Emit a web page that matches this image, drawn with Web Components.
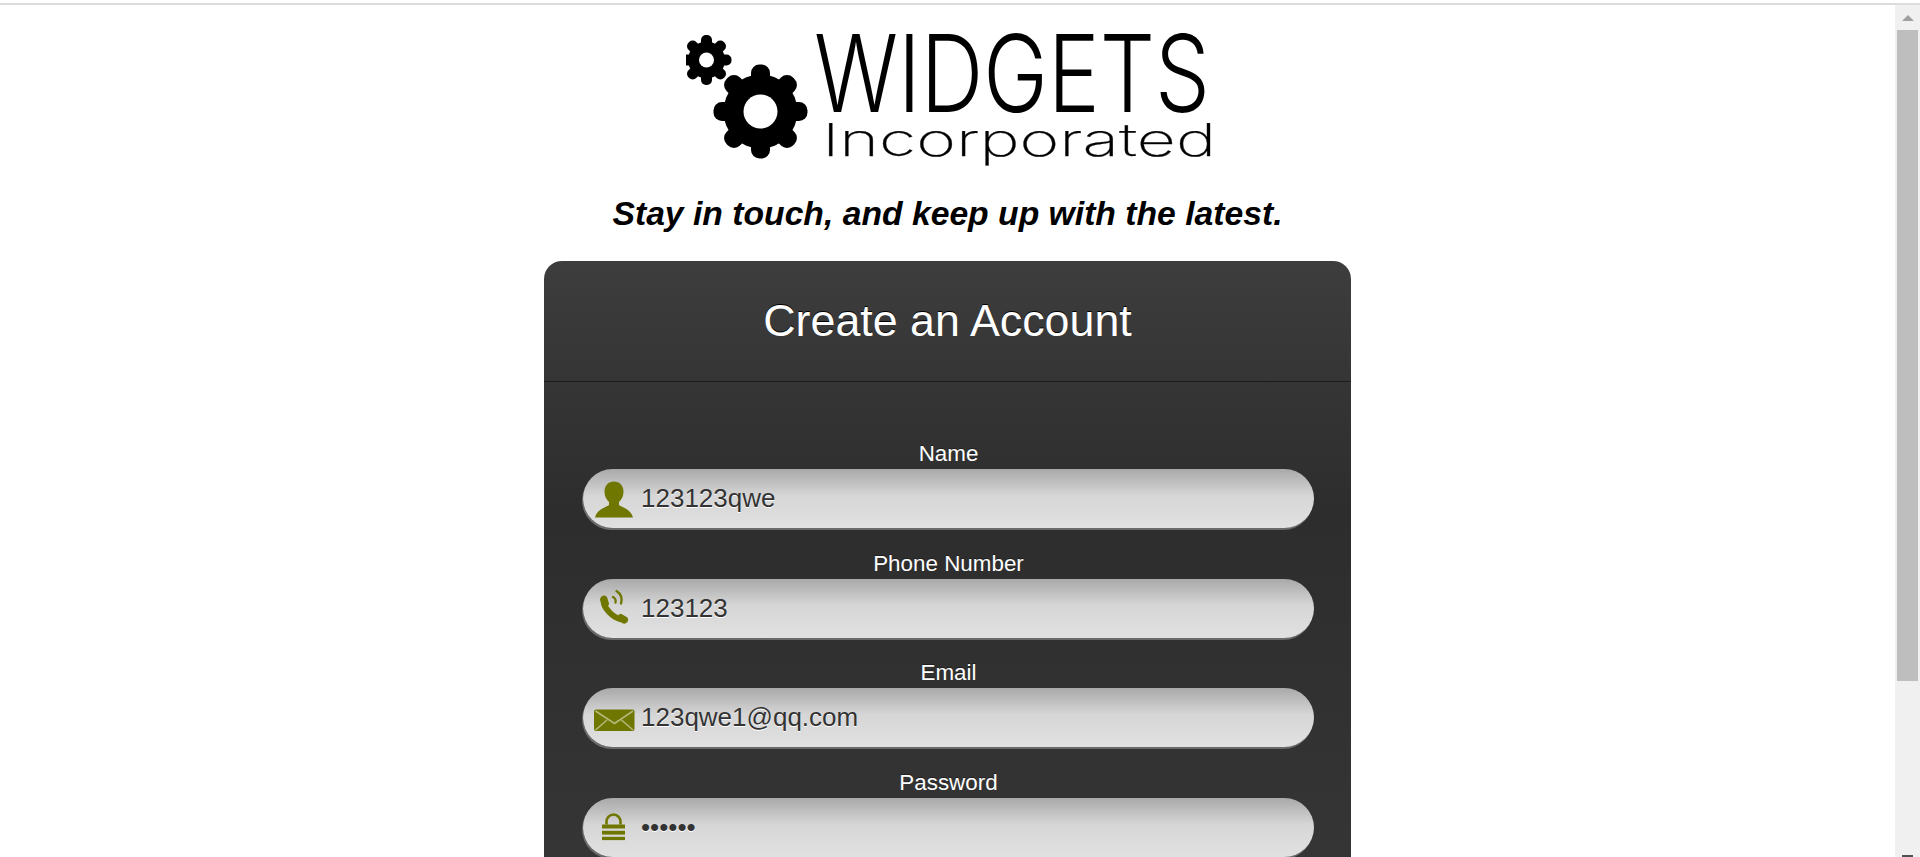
<!DOCTYPE html>
<html><head><meta charset="utf-8"><title>Widgets Incorporated</title>
<style>
html,body{margin:0;height:857px;overflow:hidden;background:#fff;font-family:"Liberation Sans",Arial,sans-serif}
</style></head><body>
<signup-page>
  <brand-logo slot="logo"></brand-logo>
  <span slot="tagline">Stay in touch, and keep up with the latest.</span>
  <account-card slot="card" heading="Create an Account">
    <form-field label="Name" value="123123qwe" icon="person"></form-field>
    <form-field label="Phone Number" value="123123" icon="phone"></form-field>
    <form-field label="Email" value="123qwe1@qq.com" icon="mail"></form-field>
    <form-field label="Password" value="••••••" icon="lock"></form-field>
  </account-card>
</signup-page>
<script>
class SignupPage extends HTMLElement{constructor(){super();this.attachShadow({mode:'open'}).innerHTML=`<style>
:host{display:block;height:857px;overflow:hidden}
.top{height:3px;background:#fff}.rule{height:2px;background:#dcdcdc}
.frame{display:flex;height:852px;overflow:hidden}
main{flex:1;min-width:0;display:flex;flex-direction:column;align-items:center;overflow:hidden}
.logo{margin-top:25px;height:142px;width:100%;display:flex;justify-content:center}
.tag{margin-top:21px;font:italic bold 33.7px/41px "Liberation Sans",Arial,sans-serif;color:#000;height:41px;white-space:nowrap}
.card{margin-top:27px}
.bar{width:25px;flex:none;background:#f0f0f0;display:flex;flex-direction:column;align-items:center;height:852px}
.up{margin-top:10px;width:0;height:0;border:6px solid transparent;border-top:0;border-bottom:6px solid #a0a0a0}
.thumb{margin-top:9px;width:21px;height:651px;background:#bebebe}
.down{margin-top:auto;width:11px;height:2px;background:#505050}
</style>
<div class="top"></div><div class="rule"></div>
<div class="frame"><main><div class="logo"><slot name="logo"></slot></div><div class="tag"><slot name="tagline"></slot></div><div class="card"><slot name="card"></slot></div></main>
<div class="bar"><div class="up"></div><div class="thumb"></div><div class="down"></div></div></div>`}}
customElements.define('signup-page',SignupPage);

const teeth=(l,w,rx)=>[0,45,90,135].map(a=>`<rect x="${-l}" y="${-w/2}" width="${2*l}" height="${w}" rx="${rx}" transform="rotate(${a})"/>`).join('');
class BrandLogo extends HTMLElement{constructor(){super();this.attachShadow({mode:'open'}).innerHTML=`<style>
:host{display:flex;width:524px;height:142px;color:#000}
svg{display:block;flex:none}
.words{width:396px;display:flex;flex-direction:column}
span{display:block;width:max-content;white-space:nowrap;transform-origin:0 0}
.w{font:300 107px/84px "Inter","Liberation Sans",sans-serif;height:84px;margin-top:1px}
.i{font:200 45px/50px "Inter","Liberation Sans",sans-serif;height:50px;margin-left:8px;-webkit-text-stroke:.25px #222}
</style>
<svg width="128" height="142" viewBox="0 0 128 142">
<g transform="translate(20.5 30)"><circle r="18.5"/>${teeth(25,11,5)}<circle r="7.5" fill="#fff"/></g>
<g transform="translate(74.5 81.500)"><circle r="37"/>${teeth(47,19,8.5)}<circle r="17" fill="#fff"/></g>
</svg>
<div class="words"><span class="w">WIDGETS</span><span class="i">Incorporated</span></div>`}
connectedCallback(){const s=this.shadowRoot;const fit=(el,w)=>{el.style.transform=`scaleX(${w/el.getBoundingClientRect().width})`};fit(s.querySelector('.w'),396);fit(s.querySelector('.i'),394)}}
customElements.define('brand-logo',BrandLogo);

class AccountCard extends HTMLElement{constructor(){super();this.attachShadow({mode:'open'}).innerHTML=`<style>
:host{display:block;width:807px;height:900px;box-sizing:border-box;border-radius:18px 18px 0 0;background:linear-gradient(#3d3d3d 0,#2d2d2d 250px,#353535 600px);color:#fff}
header{height:120px;border-bottom:1px solid #1c1c1c;text-align:center;font-size:44.8px;line-height:118px;text-shadow:0 -1px 0 #000}
.body{padding:58.5px 39px 0 39px;display:grid;grid-auto-rows:109.67px}
</style><header id="h"></header><div class="body"><slot></slot></div>`;
this.shadowRoot.getElementById('h').textContent=this.getAttribute('heading')}}
customElements.define('account-card',AccountCard);

const C='#6f7700';
const ICONS={
person:`<svg width="40" height="40" viewBox="0 0 40 40"><path fill="${C}" d="M20 2.500c5.500 0 9.500 4 9.500 10 0 5-2 8-4.500 10.500v3c3 2.500 12 4 14 12.500H1c2-8.500 11-10 14-12.500v-3c-2.500-2.500-4.500-5.500-4.500-10.500 0-6 4-10 9.500-10z"/></svg>`,
phone:`<svg width="40" height="40" viewBox="0 0 40 40"><path fill="none" stroke="${C}" stroke-width="6" stroke-linecap="round" d="M9.500 13C10 20 19 31 30 32"/><path fill="${C}" d="M6 12c0-3 2-4.500 4-4.500s3 1 3.500 3l1.500 5c.3 1-.5 2-1.500 2.500l-3 1.500zM22.500 29l2.500-2.500c1-1 2-.8 3-.2l5 3c1.500 1 1.500 3 .5 4.500s-3 2.500-5 1.500z"/><g fill="none" stroke="${C}" stroke-width="2.300" stroke-linecap="round"><path d="M19 9c2 1 3 3 2.500 5.500"/><path d="M22.500 3c4 2.500 6 7 4.500 12.500"/></g></svg>`,
mail:`<svg width="42" height="40" viewBox="0 0 42 40"><rect x="0" y="11.500" width="40.500" height="21.500" rx="2" fill="${C}"/><path fill="none" stroke="#b4b87a" stroke-width="1.600" d="M1.500 13l19 12.500L39 13M1.500 32L13 22M39 32L27.500 22"/></svg>`,
lock:`<svg width="40" height="40" viewBox="0 0 40 40"><g fill="${C}"><rect x="8" y="17.500" width="23" height="4"/><rect x="8" y="23.800" width="23" height="3.800"/><rect x="8" y="29.800" width="23" height="3.300"/></g><path fill="none" stroke="${C}" stroke-width="2.600" d="M12.500 17.500V15a7 7.500 0 0 1 14 0v2.500"/></svg>`};
class FormField extends HTMLElement{constructor(){super();this.attachShadow({mode:'open'}).innerHTML=`<style>
:host{display:block;text-align:center}
label{display:block;font-size:22.4px;line-height:26px;color:#fff;height:28px;padding-top:.5px;text-shadow:0 -1px 0 rgba(0,0,0,.4)}
.box{height:59px;width:731px;box-sizing:border-box;border-radius:30px;background:linear-gradient(#a9a9a9 0,#d6d6d6 45%,#e1e1e1 100%);box-shadow:-1px 2px 0 #6a6a6a;display:flex;align-items:center;text-align:left;overflow:hidden}
.ic{width:58px;height:40px;flex:none;padding-left:11px;box-sizing:border-box;filter:blur(.4px)}
.ic svg{display:block}
.v{font-size:26px;color:#333;text-shadow:0 1px 0 #fff;white-space:nowrap}
</style><label></label><div class="box"><span class="ic">${ICONS[this.getAttribute('icon')]}</span><span class="v"></span></div>`;
const s=this.shadowRoot;s.querySelector('label').textContent=this.getAttribute('label');s.querySelector('.v').textContent=this.getAttribute('value')}}
customElements.define('form-field',FormField);
</script></body></html>
